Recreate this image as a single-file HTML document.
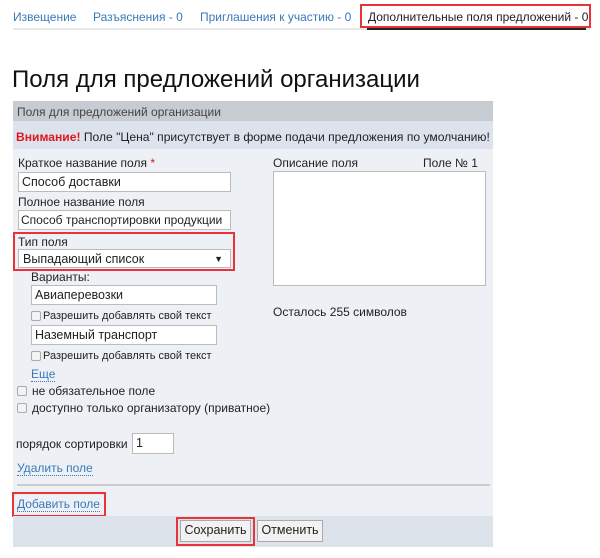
<!DOCTYPE html>
<html><head><meta charset="utf-8"><style>
*{margin:0;padding:0;box-sizing:border-box}
body{width:600px;height:558px;background:#fff;font-family:"Liberation Sans",Arial,sans-serif;font-size:12px;color:#222;position:relative;overflow:hidden}
.a{position:absolute;white-space:nowrap}
.lnk{color:#3a79b8}
.inp{position:absolute;background:#fff;border:1px solid #bbb;font-size:12.5px;padding:2px 3px;line-height:14px;white-space:nowrap;overflow:hidden}
.cb{position:absolute;width:10px;height:10px;border:1px solid #aaa;border-radius:2px;background:#f3f3f3}
.red{position:absolute;border:2px solid #e8333a}
.du{border-bottom:1px dotted #3a79b8}
.btn{position:absolute;background:#f2f2f2;border:1px solid #aaa;font-size:12.5px;text-align:center;line-height:19px}
.t{font-size:12px;top:10px}
</style></head><body>
<div class="a" style="left:13px;top:28px;width:577px;height:2px;background:#e8e8e8"></div>
<div class="a lnk t" style="left:13px">Извещение</div>
<div class="a lnk t" style="left:93px">Разъяснения - 0</div>
<div class="a lnk t" style="left:200px">Приглашения к участию - 0</div>
<div class="a t" style="left:368px;color:#222">Дополнительные поля предложений - 0</div>
<div class="a" style="left:367px;top:27px;width:219px;height:3px;background:#222"></div>
<div class="red" style="left:360px;top:4px;width:231px;height:24px"></div>

<div class="a" style="left:12px;top:66px;font-size:24px;color:#111">Поля для предложений организации</div>

<div class="a" style="left:13px;top:101px;width:480px;height:20px;background:#c7ccd3"></div>
<div class="a" style="left:17px;top:105px;color:#444">Поля для предложений организации</div>
<div class="a" style="left:13px;top:121px;width:480px;height:28px;background:#dde3ec"></div>
<div class="a" style="left:16px;top:130px;font-size:12.1px"><b style="color:#e0161c">Внимание!</b> Поле "Цена" присутствует в форме подачи предложения по умолчанию!</div>
<div class="a" style="left:13px;top:149px;width:480px;height:367px;background:#edf0f4"></div>

<div class="a" style="left:18px;top:156px">Краткое название поля <span style="color:#e0161c">*</span></div>
<div class="inp" style="left:18px;top:172px;width:213px;height:20px">Способ доставки</div>
<div class="a" style="left:18px;top:195px">Полное название поля</div>
<div class="inp" style="left:18px;top:210px;width:213px;height:20px;font-size:12px;padding-left:2px">Способ транспортировки продукции</div>
<div class="a" style="left:18px;top:235px">Тип поля</div>
<div class="inp" style="left:18px;top:249px;width:213px;height:19px;padding-left:4px">Выпадающий список<span style="position:absolute;right:7px;top:2px;font-size:9px">▼</span></div>
<div class="red" style="left:13px;top:232px;width:222px;height:39px"></div>
<div class="a" style="left:31px;top:270px">Варианты:</div>
<div class="inp" style="left:31px;top:285px;width:186px;height:20px">Авиаперевозки</div>
<div class="cb" style="left:31px;top:311px"></div>
<div class="a" style="left:43px;top:310px;font-size:11px">Разрешить добавлять свой текст</div>
<div class="inp" style="left:31px;top:325px;width:186px;height:20px">Наземный транспорт</div>
<div class="cb" style="left:31px;top:351px"></div>
<div class="a" style="left:43px;top:350px;font-size:11px">Разрешить добавлять свой текст</div>
<div class="a lnk du" style="left:31px;top:367px">Еще</div>
<div class="cb" style="left:17px;top:386px"></div>
<div class="a" style="left:32px;top:384px">не обязательное поле</div>
<div class="cb" style="left:17px;top:403px"></div>
<div class="a" style="left:32px;top:401px">доступно только организатору (приватное)</div>
<div class="a" style="left:16px;top:437px">порядок сортировки</div>
<div class="inp" style="left:132px;top:433px;width:42px;height:21px">1</div>
<div class="a lnk du" style="left:17px;top:461px">Удалить поле</div>
<div class="a" style="left:17px;top:484px;width:473px;height:2px;background:#ccc"></div>
<div class="a lnk du" style="left:17px;top:497px">Добавить поле</div>
<div class="red" style="left:12px;top:492px;width:94px;height:25px"></div>

<div class="a" style="left:273px;top:156px">Описание поля</div>
<div class="a" style="left:423px;top:156px">Поле № 1</div>
<div class="inp" style="left:273px;top:171px;width:213px;height:115px"></div>
<div class="a" style="left:273px;top:305px">Осталось 255 символов</div>

<div class="a" style="left:13px;top:516px;width:480px;height:31px;background:#dde3ea"></div>
<div class="btn" style="left:180px;top:520px;width:71px;height:22px">Сохранить</div>
<div class="red" style="left:176px;top:517px;width:79px;height:29px"></div>
<div class="btn" style="left:257px;top:520px;width:66px;height:22px">Отменить</div>
</body></html>
